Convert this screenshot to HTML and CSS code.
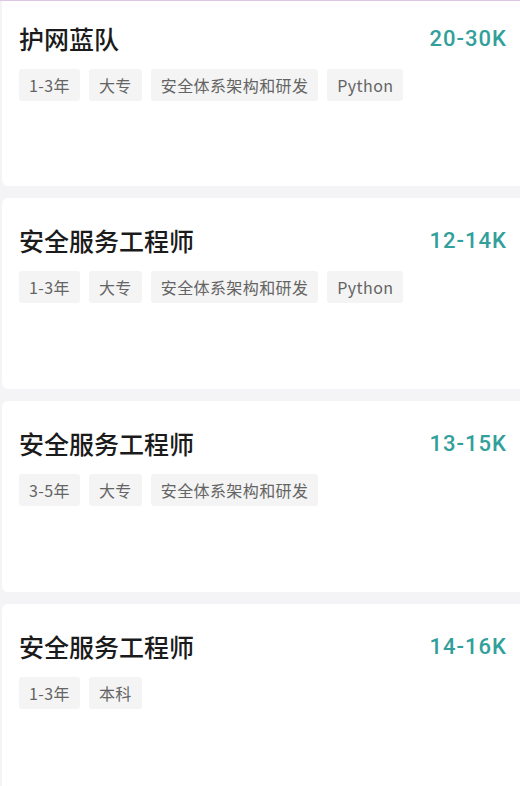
FILE: index.html
```html
<!DOCTYPE html>
<html lang="zh-CN">
<head>
    <meta charset="UTF-8">
    <meta name="viewport" content="width=device-width, initial-scale=1.0">
    <title>职位列表</title>
    <link rel="stylesheet" href="styles.css">
</head>
<body>
    <div class="job-list">
        <div class="job-card">
            <div class="job-head">
                <h3 class="job-title">护网蓝队</h3>
                <span class="job-salary">20-30K</span>
            </div>
            <div class="job-tags">
                <span class="tag">1-3年</span>
                <span class="tag">大专</span>
                <span class="tag">安全体系架构和研发</span>
                <span class="tag">Python</span>
            </div>
        </div>

        <div class="job-card">
            <div class="job-head">
                <h3 class="job-title">安全服务工程师</h3>
                <span class="job-salary">12-14K</span>
            </div>
            <div class="job-tags">
                <span class="tag">1-3年</span>
                <span class="tag">大专</span>
                <span class="tag">安全体系架构和研发</span>
                <span class="tag">Python</span>
            </div>
        </div>

        <div class="job-card">
            <div class="job-head">
                <h3 class="job-title">安全服务工程师</h3>
                <span class="job-salary">13-15K</span>
            </div>
            <div class="job-tags">
                <span class="tag">3-5年</span>
                <span class="tag">大专</span>
                <span class="tag">安全体系架构和研发</span>
            </div>
        </div>

        <div class="job-card">
            <div class="job-head">
                <h3 class="job-title">安全服务工程师</h3>
                <span class="job-salary">14-16K</span>
            </div>
            <div class="job-tags">
                <span class="tag">1-3年</span>
                <span class="tag">本科</span>
            </div>
        </div>
    </div>
</body>
</html>
```

FILE: styles.css
```css
body {
    margin: 0;
    border-top: 1px solid #dcc6e2;
    background-color: #f4f4f6;
    font-family: "Noto Sans CJK SC", "Noto Sans", sans-serif;
    overflow: hidden;
}

.job-list {
    display: flex;
    flex-direction: column;
    gap: 12px;
}

.job-card {
    height: 191px;
    box-sizing: border-box;
    margin-left: 2px;
    padding: 26px 13px 0 17px;
    background-color: #fff;
    border-radius: 6px 0 0 6px;
}

.job-card:first-child {
    height: 185px;
    padding-top: 21px;
    border-radius: 0 0 0 6px;
}

.job-head {
    display: flex;
    justify-content: space-between;
    align-items: center;
    height: 32px;
}

.job-title {
    margin: 0;
    font-size: 25px;
    font-weight: 500;
    color: #1b1b1b;
    line-height: 32px;
}

.job-salary {
    font-family: "Roboto", "Noto Sans", sans-serif;
    font-size: 22px;
    font-weight: 500;
    letter-spacing: 1px;
    color: #329f9b;
}

.job-tags {
    display: flex;
    gap: 9px;
    margin-top: 15px;
}

.tag {
    height: 32px;
    line-height: 32px;
    padding: 0 10px;
    background-color: #f4f4f4;
    border-radius: 3px;
    font-size: 16px;
    letter-spacing: 0.4px;
    color: #646464;
}
```
